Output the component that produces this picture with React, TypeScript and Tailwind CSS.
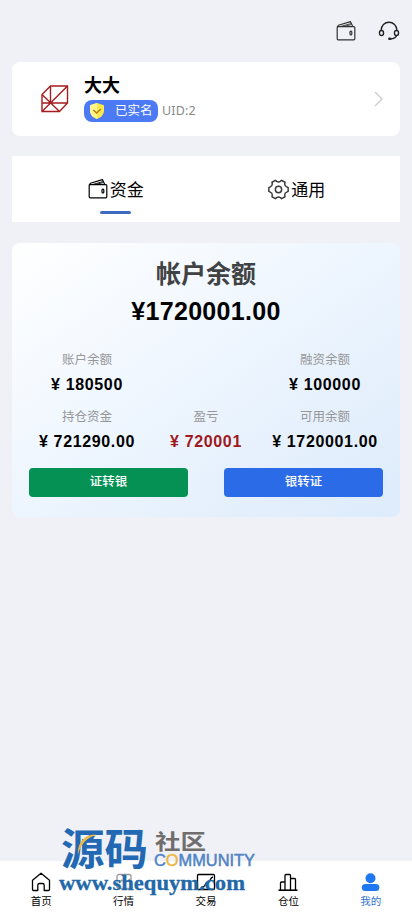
import type { ReactNode } from "react";

const SANS = "font-['Liberation_Sans','Noto_Sans_CJK_SC',sans-serif]";

function WalletIcon({ className }: { className?: string }) {
  return (
    <svg viewBox="0 0 20 20" fill="none" stroke="currentColor" strokeWidth="1.2" strokeLinejoin="round" className={className}>
      <rect x="1.2" y="5.6" width="17.6" height="13.2" rx="1" />
      <path d="M1.2 6.2 2.4 4.2 14.4.6l2.4 4.8" />
      <path d="M5 5.4 14.9 2.6M9 5.2l6.2-1.6" strokeWidth="0.9" />
      <rect x="14" y="10.2" width="1.8" height="3.8" rx="0.9" />
    </svg>
  );
}

function HeadsetIcon() {
  return (
    <svg viewBox="0 0 22 20" fill="none" stroke="#222" strokeWidth="1.4" className="h-5 w-[22px]">
      <path d="M3.2 10V9a7.8 7.8 0 0 1 15.6 0v1M18.5 14c0 2.4-2.6 3.7-6.5 3.9" />
      <rect x="1.5" y="9.5" width="4" height="5" rx="2" />
      <rect x="16.5" y="9.5" width="4" height="5" rx="2" />
      <circle cx="11.6" cy="17.8" r="1.2" fill="#111" stroke="none" />
      <path d="M10.5 17.8h3" strokeWidth="1.8" />
    </svg>
  );
}

function GearIcon() {
  return (
    <svg viewBox="0 0 20 20" fill="none" stroke="#3a3a3a" strokeWidth="1.4" strokeLinejoin="round" className="h-[21px] w-[21px]">
      <path d="M7 1.2 8.2 2.3Q10 3.4 11.8 2.3L13 1.2 16.2 3.1 15.9 4.8Q16 6.8 17.8 7.5L19.2 8.2V11.8L17.8 12.5Q16 13.2 15.9 15.2L16.2 16.9 13 18.8 11.8 17.7Q10 16.6 8.2 17.7L7 18.8 3.8 16.9 4.1 15.2Q4 13.2 2.2 12.5L.8 11.8V8.2L2.2 7.5Q4 6.8 4.1 4.8L3.8 3.1Z" />
      <circle cx="10" cy="10" r="3" />
    </svg>
  );
}

function LogoIcon() {
  return (
    <svg viewBox="0 0 28 28" fill="none" stroke="#a51d20" strokeWidth="1.4" className="h-7 w-7">
      <path d="M9.5 1H26.5V18L18.5 26.5H1V9.5ZM9.5 1V18M1 18H26.5M1 9.5 18.5 26.5M1 26.5 26.5 1" />
    </svg>
  );
}

function ShieldIcon() {
  return (
    <svg viewBox="0 0 16 16" className="h-4 w-4">
      <path d="M8 0 15 2.3V8q0 5-7 8-7-3-7-8V2.3Z" fill="#f9e84e" />
      <path d="M8 0v16Q1 13 1 8V2.3Z" fill="#fff58c" />
      <path d="m4.3 7 3.3 3 4.3-4" fill="none" stroke="#b77c16" strokeWidth="1.5" />
    </svg>
  );
}

function Stat({ label, value, red }: { label: string; value: string; red?: boolean }) {
  return (
    <div className="flex flex-col items-center whitespace-nowrap">
      <span className="h-[18px] text-[12.5px] leading-[19px] text-[#969799]">{label}</span>
      <span className={`mt-[6px] h-5 text-base font-bold leading-5 tracking-[0.65px] ${red ? "text-[#a01822]" : "text-black"}`}>
        ¥ {value}
      </span>
    </div>
  );
}

const NAV: { label: string; icon: ReactNode; active?: boolean }[] = [
  {
    label: "首页",
    icon: <path d="M1.5 8.2 10 1.2l8.5 7v9.2q0 1.1-1.1 1.1h-4.2v-5.2q0-1.8-1.8-1.8H8.6q-1.8 0-1.8 1.8v5.2H2.6q-1.1 0-1.1-1.1Z" />,
  },
  {
    label: "行情",
    icon: (
      <g stroke="#999">
        <rect x="3" y="2.5" width="14" height="14" rx="2" />
        <path d="m5 11 3-3 3 3 5-4" />
      </g>
    ),
  },
  {
    label: "交易",
    icon: (
      <>
        <rect x="1.5" y="2.5" width="17" height="15" rx="1" />
        <path d="M5 15.5c6-.5 3-5 7-5.5 3-.4 1.5-4.5 5-5" />
      </>
    ),
  },
  {
    label: "仓位",
    icon: (
      <>
        <path d="M2.5 18v-7q0-1 1-1H7M7 18V3.5q0-1 1-1h3.5q1 0 1 1V18M12.5 6.5h4q1 0 1 1V18" />
        <path d="M.5 18.2h19" strokeWidth="1.6" />
      </>
    ),
  },
  {
    label: "我的",
    active: true,
    icon: (
      <g fill="#1f78ef" stroke="none">
        <circle cx="9.5" cy="6.2" r="5" />
        <rect x="0.8" y="12" width="17.6" height="7" rx="3.5" />
      </g>
    ),
  },
];

function Watermark() {
  return (
    <svg viewBox="0 0 200 70" className="pointer-events-none absolute bottom-[18px] left-[58px] h-[70px] w-[200px] overflow-visible">
      <g fontFamily="'Noto Sans CJK SC', sans-serif">
        <text x="3" y="38" fontSize="43" fontWeight="700" textLength="87" lengthAdjust="spacingAndGlyphs" fill="#2268b3">源码</text>
        <text x="97" y="22" fontSize="21" fontWeight="700" textLength="51" lengthAdjust="spacingAndGlyphs" fill="#706d6d">社区</text>
      </g>
      <path d="M20 28C19 17 26 6 39 8 29 10 22 18 20 28Z" fill="#edb744" />
      <text x="96" y="39" fontFamily="'Liberation Sans', sans-serif" fontSize="16.5" textLength="101" lengthAdjust="spacingAndGlyphs" fill="#4f83c6" stroke="#4f83c6" strokeWidth=".5">
        C<tspan fill="#edb744" stroke="#edb744">O</tspan>MMUNITY
      </text>
      <text x="1" y="63" fontFamily="'Liberation Serif', serif" fontWeight="700" fontSize="20" textLength="186" lengthAdjust="spacingAndGlyphs" fill="#2268a8" stroke="#2268a8" strokeWidth=".3">
        www.shequym.com
      </text>
    </svg>
  );
}

export default function App() {
  return (
    <div className={`relative flex h-[915px] w-full flex-col bg-[#eff1f6] text-black ${SANS}`}>
      <header className="flex h-[62px] items-center justify-end gap-[22px] pr-3">
        <WalletIcon className="h-5 w-5 text-[#333]" />
        <HeadsetIcon />
      </header>

      <section className="mx-3 flex h-[74px] items-center rounded-lg bg-white pl-[29px] pr-4">
        <LogoIcon />
        <div className="ml-[15px] flex-1 pb-[2px]">
          <h1 className="h-[25px] text-lg font-bold leading-[22px]">大大</h1>
          <div className="flex items-center">
            <div className="flex h-[22px] w-[74px] items-center rounded-lg bg-[#4c79f4] pl-[5px] text-[12.5px] text-white">
              <ShieldIcon />
              <span className="ml-[10px] whitespace-nowrap leading-[22px]">已实名</span>
            </div>
            <span className="ml-1 font-['Noto_Sans'] text-[12.5px] leading-[22px] tracking-[0.15px] text-[#888]">UID:2</span>
          </div>
        </div>
        <svg viewBox="0 0 10 18" fill="none" stroke="#ccc" strokeWidth="1.4" className="h-[18px] w-[10px]">
          <path d="m1 2 7 7-7 7" />
        </svg>
      </section>

      <nav className="mx-3 mt-5 flex h-[66px] bg-white pl-3 pr-[9px]">
        <div className="flex flex-1 flex-col items-center pt-[21px]">
          <div className="flex h-6 items-center gap-[2px] text-[17px]">
            <WalletIcon className="h-5 w-5" />
            <span className="leading-6 pt-[3px]">资金</span>
          </div>
          <div className="mt-[10px] h-[3px] w-[31px] rounded-full bg-[#3e6bc2]" />
        </div>
        <div className="flex flex-1 flex-col items-center pt-[21px]">
          <div className="mr-[5px] flex h-6 items-center gap-[2px] text-[17px]">
            <GearIcon />
            <span className="leading-6 pt-[3px]">通用</span>
          </div>
        </div>
      </nav>

      <section className="mx-3 mt-[21px] h-[274px] rounded-lg bg-linear-to-br from-white via-[#edf5fe] to-[#ddebfb]">
        <h2 className="pt-[13px] text-center text-[25px] font-bold leading-[36px] text-[#404244]">帐户余额</h2>
        <p className="mt-[3px] text-center text-[25px] font-bold leading-[32px] tracking-[0.3px]">¥1720001.00</p>
        <div className="mt-[24px] grid grid-cols-[150px_88px_150px] gap-y-[13px]">
          <Stat label="账户余额" value="180500" />
          <span />
          <Stat label="融资余额" value="100000" />
          <Stat label="持仓资金" value="721290.00" />
          <Stat label="盈亏" value="720001" red />
          <Stat label="可用余额" value="1720001.00" />
        </div>
        <div className="mt-[16px] flex justify-between px-[17px] text-[12.5px] font-medium text-white">
          <button className="h-[29px] w-[159px] rounded bg-[#049153]">证转银</button>
          <button className="h-[29px] w-[159px] rounded bg-[#2c6be8]">银转证</button>
        </div>
      </section>

      <footer className="mt-auto flex h-[54px] bg-white">
        {NAV.map((item) => (
          <div key={item.label} className={`flex flex-1 flex-col items-center pt-[11px] ${item.active ? "text-[#3274cd]" : "text-black"}`}>
            <svg viewBox="0 0 20 20" fill="none" stroke="currentColor" strokeWidth="1.3" strokeLinejoin="round" className="h-5 w-5">
              {item.icon}
            </svg>
            <span className="mt-px text-[10.5px] leading-4">{item.label}</span>
          </div>
        ))}
      </footer>

      <Watermark />
    </div>
  );
}
